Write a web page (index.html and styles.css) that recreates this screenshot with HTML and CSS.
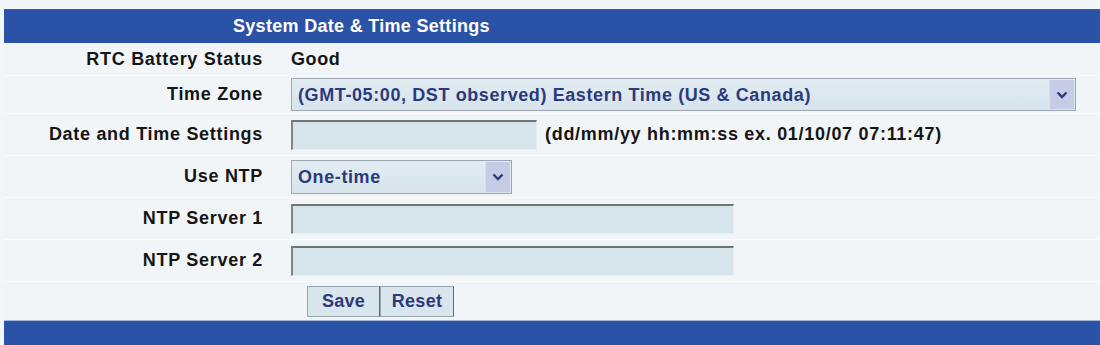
FILE: index.html
```html
<!DOCTYPE html>
<html lang="en">
<head>
    <meta charset="UTF-8">
    <meta name="viewport" content="width=device-width, initial-scale=1.0">
    <title>System Date &amp; Time Settings</title>
    <link rel="stylesheet" href="styles.css">
</head>
<body>
    <div class="panel">
        <div class="panel-title">System Date &amp; Time Settings</div>

        <div class="row row-rtc">
            <div class="label">RTC Battery Status</div>
            <div class="value">Good</div>
        </div>

        <div class="row row-tz">
            <div class="label">Time Zone</div>
            <div class="value">
                <div class="select select-tz">
                    <select>
                        <option>(GMT-05:00, DST observed) Eastern Time (US &amp; Canada)</option>
                    </select>
                    <span class="arrow">
                        <svg width="12" height="8" viewBox="0 0 12 8"><path d="M1.5 1.5 L6 6 L10.5 1.5" fill="none" stroke="#2b3a78" stroke-width="2.4"/></svg>
                    </span>
                </div>
            </div>
        </div>

        <div class="row">
            <div class="label">Date and Time Settings</div>
            <div class="value">
                <input type="text" class="field field-date">
                <span class="hint">(dd/mm/yy hh:mm:ss ex. 01/10/07 07:11:47)</span>
            </div>
        </div>

        <div class="row">
            <div class="label">Use NTP</div>
            <div class="value">
                <div class="select select-ntp">
                    <select>
                        <option>One-time</option>
                        <option>Periodic</option>
                        <option>Disabled</option>
                    </select>
                    <span class="arrow">
                        <svg width="12" height="8" viewBox="0 0 12 8"><path d="M1.5 1.5 L6 6 L10.5 1.5" fill="none" stroke="#2b3a78" stroke-width="2.4"/></svg>
                    </span>
                </div>
            </div>
        </div>

        <div class="row">
            <div class="label">NTP Server 1</div>
            <div class="value"><input type="text" class="field field-server"></div>
        </div>

        <div class="row">
            <div class="label">NTP Server 2</div>
            <div class="value"><input type="text" class="field field-server"></div>
        </div>

        <div class="row row-buttons">
            <div class="label"></div>
            <div class="value">
                <button class="btn">Save</button><button class="btn">Reset</button>
            </div>
        </div>

        <div class="panel-footer"></div>
    </div>
</body>
</html>
```

FILE: styles.css
```css
body {
    margin: 0;
    padding: 9px 0 0 4px;
    background: #f3f6f9;
    font-family: "Liberation Sans", Arial, sans-serif;
    font-weight: bold;
    font-size: 18px;
    color: #151515;
    overflow: hidden;
}
.panel {
    background: #f2f5f8;
}
.panel-title {
    height: 34px;
    line-height: 32px;
    background: #2a52a6;
    border-top: 1px solid #3a5f9c;
    box-sizing: border-box;
    color: #fff;
    padding-left: 229px;
    font-size: 18px;
    letter-spacing: 0.3px;
}
.row {
    display: grid;
    grid-template-columns: 259px 1fr;
    column-gap: 28px;
    align-items: center;
    height: 42px;
    border-bottom: 1px solid #fbfcfd;
    box-sizing: border-box;
}
.row-rtc { height: 33px; }
.row-tz { height: 38px; }
.row-buttons { height: 38px; border-bottom: none; }
.label {
    text-align: right;
    letter-spacing: 0.7px;
}
.value {
    display: flex;
    align-items: center;
    letter-spacing: 0.6px;
}
.select {
    display: flex;
    align-items: stretch;
    box-sizing: border-box;
    height: 34px;
    border: 1px solid #9ea7b2;
    background: linear-gradient(#e2ebf2, #d7e4ec);
    padding: 1px;
}
.select-tz { width: 785px; height: 33px; }
.select-ntp { width: 221px; }
.select select {
    flex: 1;
    appearance: none;
    -webkit-appearance: none;
    border: none;
    background: transparent;
    font-family: inherit;
    font-weight: bold;
    font-size: 18px;
    letter-spacing: 0.6px;
    color: #2b3a7c;
    padding: 0 0 0 5px;
    outline: none;
}
.arrow {
    width: 24px;
    display: flex;
    align-items: center;
    justify-content: center;
    background: #c6cbe6;
    border-left: 1px solid #d8ddef;
}
.field {
    box-sizing: border-box;
    height: 30px;
    background: #d6e5ec;
    border-style: solid;
    border-width: 2px 1px 1px 2px;
    border-color: #6e7671 #e6edf0 #e6edf0 #7d8580;
    outline: none;
    font-family: inherit;
    font-size: 16px;
}
.field-date { width: 246px; }
.field-server { width: 443px; }
.hint {
    margin-left: 8px;
    letter-spacing: 0.7px;
}
.btn {
    margin: 0;
    height: 31px;
    padding: 0 8px;
    background: #d9e5ec;
    border: 1px solid #98a6b2;
    border-right-color: #5f6a74;
    font-family: inherit;
    font-weight: bold;
    font-size: 18px;
    letter-spacing: 0.3px;
    color: #2b3a7a;
    cursor: pointer;
}
.btn:first-child {
    margin-left: 16px;
    width: 73px;
}
.btn + .btn {
    width: 74px;
    border-left-color: #98a6b2;
}
.panel-footer {
    height: 30px;
    background: #2a52a6;
    border-top: 1px solid #a9bbd8;
}
```
